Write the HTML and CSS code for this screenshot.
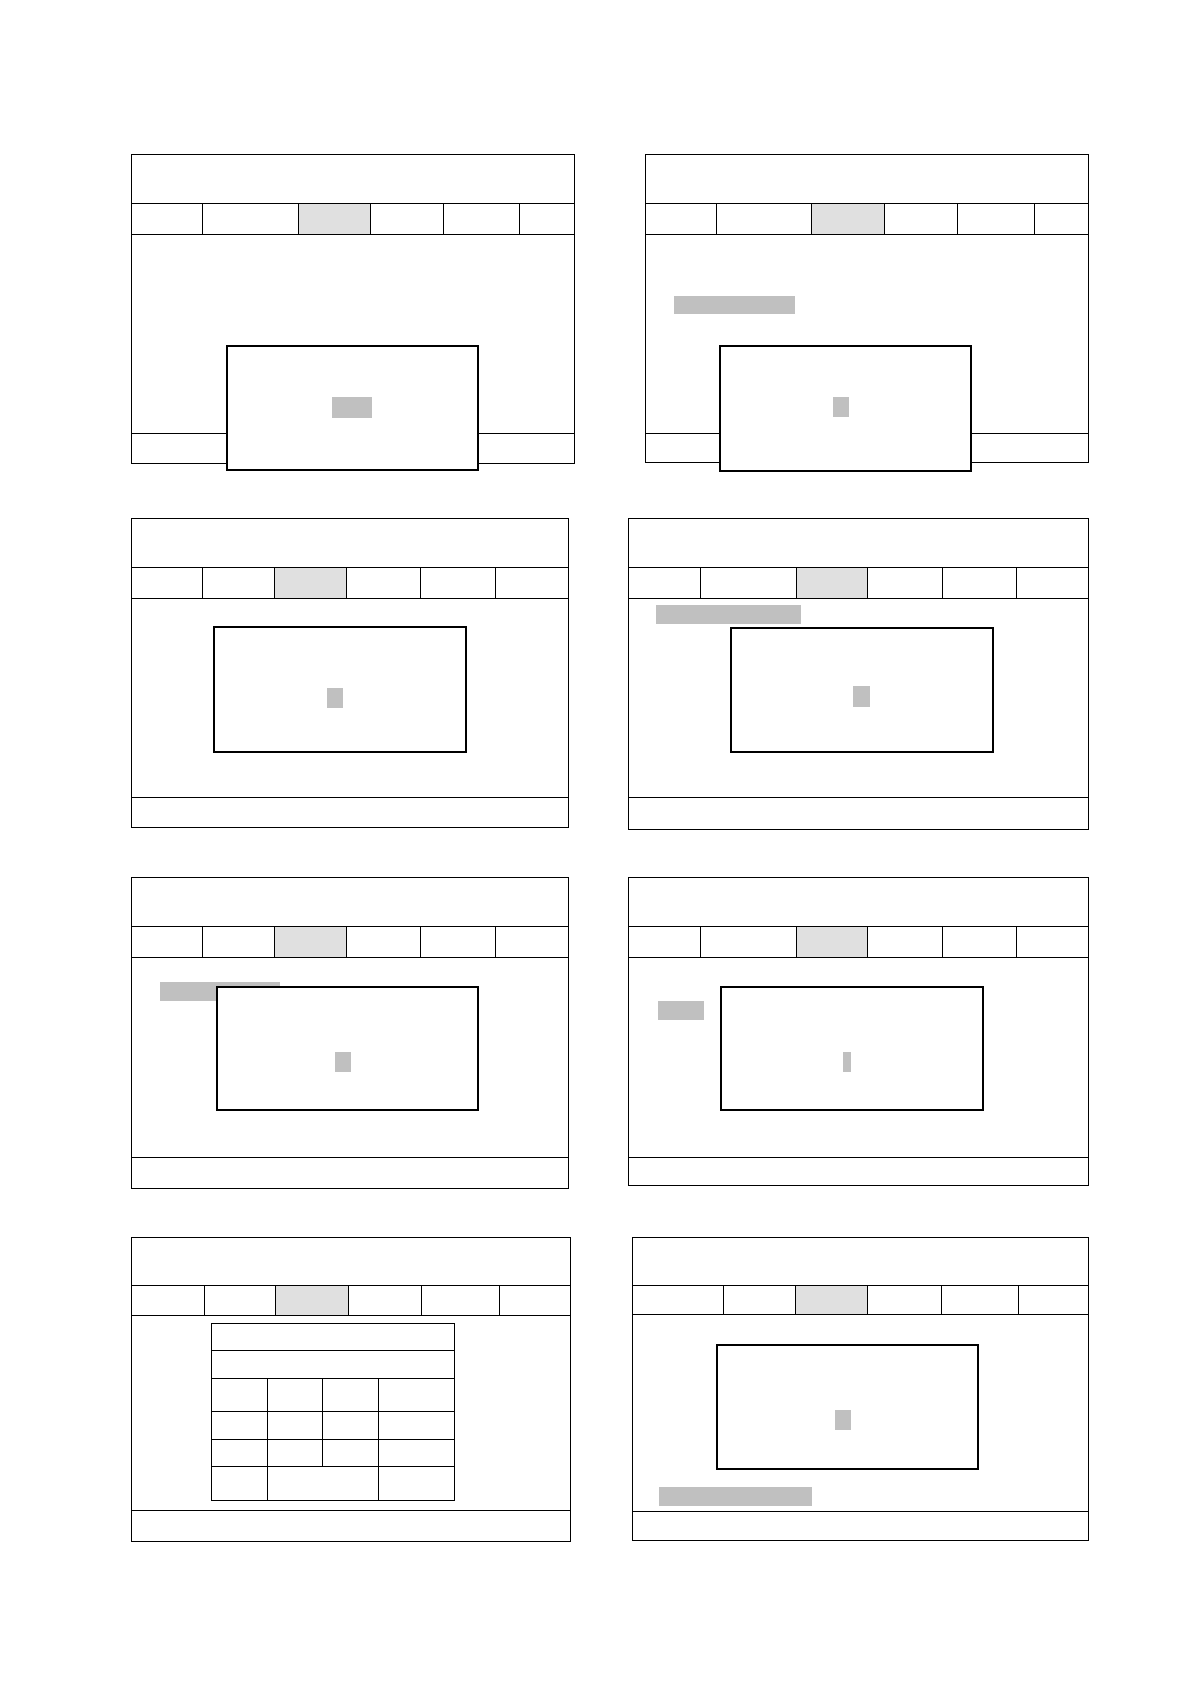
FILE: index.html
```html
<!DOCTYPE html>
<html>
<head>
<meta charset="utf-8">
<title>Screens</title>
<link rel="stylesheet" href="styles.css">
</head>
<body>
<div class="page">
  <div class="row r1">
    <div class="panel p1">
      <div class="hdr"></div>
      <div class="tabs t1"><div class="tab"></div><div class="tab"></div><div class="tab on"></div><div class="tab"></div><div class="tab"></div><div class="tab"></div></div>
      <div class="bd">
        <div class="dlg d1"><div class="blk b40"></div></div>
      </div>
      <div class="ft"></div>
    </div>
    <div class="panel p2">
      <div class="hdr"></div>
      <div class="tabs t2"><div class="tab"></div><div class="tab"></div><div class="tab on"></div><div class="tab"></div><div class="tab"></div><div class="tab"></div></div>
      <div class="bd">
        <div class="bar bar2"></div>
        <div class="dlg d2"><div class="blk b16"></div></div>
      </div>
      <div class="ft"></div>
    </div>
  </div>

  <div class="row r2">
    <div class="panel p3">
      <div class="hdr"></div>
      <div class="tabs t3"><div class="tab"></div><div class="tab"></div><div class="tab on"></div><div class="tab"></div><div class="tab"></div><div class="tab"></div></div>
      <div class="bd">
        <div class="dlg d3"><div class="blk b16"></div></div>
      </div>
      <div class="ft"></div>
    </div>
    <div class="panel p4">
      <div class="hdr"></div>
      <div class="tabs t4"><div class="tab"></div><div class="tab"></div><div class="tab on"></div><div class="tab"></div><div class="tab"></div><div class="tab"></div></div>
      <div class="bd">
        <div class="bar bar4"></div>
        <div class="dlg d4"><div class="blk b17"></div></div>
      </div>
      <div class="ft"></div>
    </div>
  </div>

  <div class="row r3">
    <div class="panel p5">
      <div class="hdr"></div>
      <div class="tabs t3"><div class="tab"></div><div class="tab"></div><div class="tab on"></div><div class="tab"></div><div class="tab"></div><div class="tab"></div></div>
      <div class="bd">
        <div class="bar bar5"></div>
        <div class="dlg d5"><div class="blk b16"></div></div>
      </div>
      <div class="ft"></div>
    </div>
    <div class="panel p6">
      <div class="hdr"></div>
      <div class="tabs t4"><div class="tab"></div><div class="tab"></div><div class="tab on"></div><div class="tab"></div><div class="tab"></div><div class="tab"></div></div>
      <div class="bd">
        <div class="bar bar6"></div>
        <div class="dlg d6"><div class="blk b8"></div></div>
      </div>
      <div class="ft"></div>
    </div>
  </div>

  <div class="row r4">
    <div class="panel p7">
      <div class="hdr"></div>
      <div class="tabs t7"><div class="tab"></div><div class="tab"></div><div class="tab on"></div><div class="tab"></div><div class="tab"></div><div class="tab"></div></div>
      <div class="bd">
        <div class="tbl">
          <div class="span4"></div>
          <div class="span4"></div>
          <div></div><div></div><div></div><div></div>
          <div></div><div></div><div></div><div></div>
          <div></div><div></div><div></div><div></div>
          <div></div><div class="span2"></div><div></div>
        </div>
      </div>
      <div class="ft"></div>
    </div>
    <div class="panel p8">
      <div class="hdr"></div>
      <div class="tabs t8"><div class="tab"></div><div class="tab"></div><div class="tab on"></div><div class="tab"></div><div class="tab"></div><div class="tab"></div></div>
      <div class="bd">
        <div class="dlg d8"><div class="blk b16"></div></div>
        <div class="bar bar8"></div>
      </div>
      <div class="ft"></div>
    </div>
  </div>
</div>
</body>
</html>
```

FILE: styles.css
```css
* { box-sizing: border-box; }
html, body { margin: 0; padding: 0; background: #fff; }
body { font-family: "Liberation Sans", Arial, sans-serif; color: #000; }

.page { padding-top: 154px; width: 1191px; }

.row { display: flex; align-items: flex-start; padding-left: 131px; }
.r1 { margin-bottom: 54px; }
.r2 { margin-bottom: 47px; }
.r3 { margin-bottom: 48px; }

.panel {
  display: flex;
  flex-direction: column;
  border: 1px solid #000;
  background: #fff;
  --hh: 49px; --th: 31px; --bh: 199px; --fh: 29px;
}
.hdr { height: var(--hh); border-bottom: 1px solid #000; }
.tabs { display: grid; height: var(--th); border-bottom: 1px solid #000; }
.tab { border-right: 1px solid #000; }
.tab:last-child { border-right: 0; }
.tab.on { background: #e0e0e0; }
.bd { position: relative; display: flow-root; height: var(--bh); border-bottom: 1px solid #000; }
.ft { height: var(--fh); }

/* panel sizes */
.p1 { width: 444px; }
.p2 { width: 444px; margin-left: 70px; --fh: 28px; }
.p3 { width: 438px; }
.p4 { width: 461px; margin-left: 59px; --fh: 31px; }
.p5 { width: 438px; --bh: 200px; --fh: 30px; }
.p6 { width: 461px; margin-left: 59px; --bh: 200px; --fh: 27px; }
.p7 { width: 440px; --hh: 48px; --th: 30px; --bh: 195px; --fh: 30px; }
.p8 { width: 457px; margin-left: 61px; --hh: 48px; --th: 29px; --bh: 197px; --fh: 28px; }

/* tab column widths */
.t1 { grid-template-columns: 71px 96px 72px 73px 76px 1fr; }
.t2 { grid-template-columns: 71px 95px 73px 73px 77px 1fr; }
.t3 { grid-template-columns: 71px 72px 72px 74px 75px 1fr; }
.t4 { grid-template-columns: 72px 96px 71px 75px 74px 1fr; }
.t7 { grid-template-columns: 73px 71px 73px 73px 78px 1fr; }
.t8 { grid-template-columns: 91px 72px 72px 74px 77px 1fr; }

/* grey placeholders */
.bar, .blk { background: #c0c0c0; }
.bar2 { width: 121px; height: 18px; margin: 61px 0 0 28px; }
.bar4 { width: 145px; height: 19px; margin: 6px 0 0 27px; }
.bar5 { width: 120px; height: 19px; margin: 24px 0 0 28px; }
.bar6 { width: 46px; height: 19px; margin: 43px 0 0 29px; }
.bar8 { width: 153px; height: 19px; margin: 172px 0 0 26px; }

.b40 { width: 40px; height: 21px; }
.b16 { width: 16px; height: 20px; }
.b17 { width: 17px; height: 21px; }
.b8 { width: 8px; height: 20px; }

/* modal dialogs overlaying the screen */
.dlg {
  position: absolute;
  z-index: 2;
  background: #fff;
  border: 2px solid #000;
}
.d1 { left: 94px; top: 110px; width: 253px; height: 126px; padding: 50px 0 0 104px; }
.d2 { left: 73px; top: 110px; width: 253px; height: 127px; padding: 50px 0 0 112px; }
.d3 { left: 81px; top: 27px; width: 254px; height: 127px; padding: 60px 0 0 112px; }
.d4 { left: 101px; top: 28px; width: 264px; height: 126px; padding: 57px 0 0 121px; }
.d5 { left: 84px; top: 28px; width: 263px; height: 125px; padding: 64px 0 0 117px; }
.d6 { left: 91px; top: 28px; width: 264px; height: 125px; padding: 64px 0 0 121px; }
.d8 { left: 83px; top: 29px; width: 263px; height: 126px; padding: 64px 0 0 117px; }

/* table in panel 7 */
.tbl {
  display: grid;
  grid-template-columns: 55px 54px 55px 75px;
  grid-template-rows: 26px 27px 32px 27px 26px 33px;
  gap: 1px;
  width: 244px;
  margin: 7px 0 0 79px;
  background: #000;
  border: 1px solid #000;
}
.tbl > div { background: #fff; }
.span4 { grid-column: span 4; }
.span2 { grid-column: span 2; }
```
